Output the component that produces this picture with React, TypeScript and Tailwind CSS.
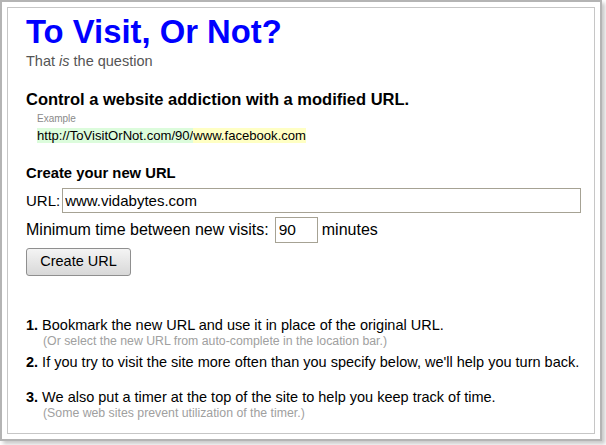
import React, { useState } from 'react';

const sans = { fontFamily: '"Liberation Sans", Arial, sans-serif' };

export default function App() {
  const [url, setUrl] = useState('www.vidabytes.com');
  const [minutes, setMinutes] = useState('90');

  return (
    <div className="bg-white w-[606px] h-[445px]" style={sans}>
      {/* outer frame with drop shadow */}
      <div className="w-[602px] h-[441px] border-2 border-[#b4b4b4] p-[5px] bg-white shadow-[3px_3px_4px_rgba(0,0,0,0.22)]">
        <div className="h-full border border-[#c6c6c6] pl-[18px] pt-[6px] text-black">
          <h1 className="text-[32.8px] leading-[36px] font-bold text-[#0000ff]">To Visit, Or Not?</h1>
          <p className="mt-[2px] text-[14.5px] leading-[18px] text-[#555555]">
            That <i>is</i> the question
          </p>

          <h2 className="mt-[19px] text-[16.5px] leading-[20px] font-bold">
            Control a website addiction with a modified URL.
          </h2>
          <div className="pl-[11px]">
            <div className="mt-[4px] text-[10px] leading-[12px] text-[#8a8a8a]">Example</div>
            <div className="mt-[3px] text-[13.1px] leading-[15px]">
              <span className="bg-[#dcfcdc]">http://ToVisitOrNot.com/90/</span>
              <span className="bg-[#ffffc4]">www.facebook.com</span>
            </div>
          </div>

          <h3 className="mt-[21px] text-[14.8px] leading-[18px] font-bold">Create your new URL</h3>

          <div className="mt-[6px] flex items-center">
            <label className="text-[15px] leading-[18px]">URL:</label>
            <input
              value={url}
              onChange={(e) => setUrl(e.target.value)}
              className="ml-[2px] w-[519px] h-[25px] border border-[#a6a294] px-[2px] text-[15px] outline-none"
            />
          </div>

          <div className="mt-[4px] flex items-center">
            <label className="text-[16px] leading-[18px]">Minimum time between new visits:</label>
            <input
              value={minutes}
              onChange={(e) => setMinutes(e.target.value)}
              className="ml-[6px] w-[43px] h-[26px] border border-[#a6a294] px-[3px] text-[15.5px] outline-none"
            />
            <span className="ml-[4px] text-[16px] leading-[18px]">minutes</span>
          </div>

          <button className="mt-[5px] w-[105px] h-[28px] rounded-[3px] border border-[#8f8f8f] bg-gradient-to-b from-[#f4f4f4] to-[#d8d8d8] text-[14.5px] text-black">
            Create URL
          </button>

          <ol className="mt-[40px] text-[14.5px] leading-[18px]">
            <li>
              <b>1.</b> Bookmark the new URL and use it in place of the original URL.
              <div className="pl-[17px] text-[12.3px] leading-[14px] text-[#a0a0a0]">
                (Or select the new URL from auto-complete in the location bar.)
              </div>
            </li>
            <li className="mt-[5px]">
              <b>2.</b> If you try to visit the site more often than you specify below, we'll help you turn back.
            </li>
            <li className="mt-[17px]">
              <b>3.</b> We also put a timer at the top of the site to help you keep track of time.
              <div className="pl-[17px] text-[12.3px] leading-[14px] text-[#a0a0a0]">
                (Some web sites prevent utilization of the timer.)
              </div>
            </li>
          </ol>
        </div>
      </div>
    </div>
  );
}
